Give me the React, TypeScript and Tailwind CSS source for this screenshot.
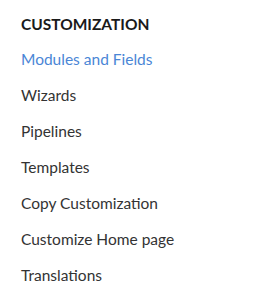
const items = [
  "Modules and Fields",
  "Wizards",
  "Pipelines",
  "Templates",
  "Copy Customization",
  "Customize Home page",
  "Translations",
];

export default function App() {
  return (
    <div className="h-[304px] w-[277px] bg-white px-[21px] pt-[14px] font-['Lato',sans-serif]">
      <h2 className="text-[15.5px] font-bold leading-[20px] text-[#1a1a1a]">CUSTOMIZATION</h2>
      <ul className="mt-[7px] flex flex-col">
        {items.map((item, i) => (
          <li
            key={item}
            className={`text-[15.5px] leading-[36px] ${i === 0 ? "text-[#4a86d6]" : "text-[#333333]"}`}
          >
            {item}
          </li>
        ))}
      </ul>
    </div>
  );
}
